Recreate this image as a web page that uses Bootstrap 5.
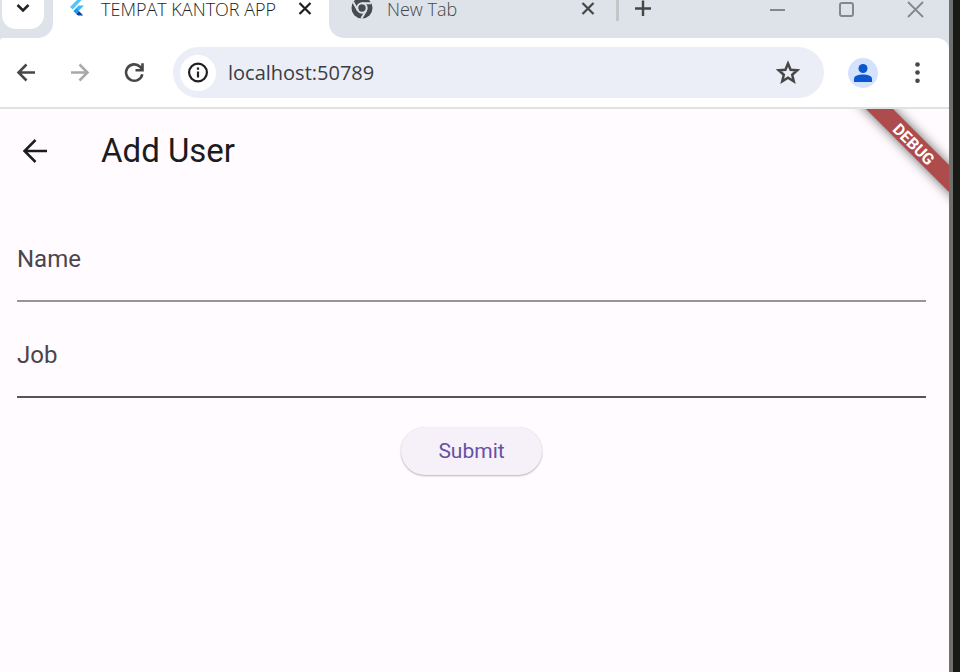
<!DOCTYPE html>
<html lang="en">
<head>
<meta charset="utf-8">
<meta name="viewport" content="width=device-width, initial-scale=1">
<title>TEMPAT KANTOR APP</title>
<link href="https://cdn.jsdelivr.net/npm/bootstrap@5.3.0/dist/css/bootstrap.min.css" rel="stylesheet">
<style>
  body { background: #181815; }
  button { color: inherit; }
  svg { display: block; flex: none; overflow: visible; }
  .icon-btn { border: 0; background: none; padding: 0; display: flex; align-items: center; justify-content: center; flex: none; }
  .browser { font-family: "Open Sans", "Noto Sans", sans-serif; }
  .window-edge { width: 4px; background: #6f716f; margin-right: 7px; }
  .tab-strip { background: #fff; height: 38px; }
  .strip-bg { background: #dee2e9; }
  .strip-start { width: 53px; border-bottom-right-radius: 15px; padding-left: 2px; }
  .tab-search { width: 42px; height: 29px; background: #fff; border-radius: 0 0 14px 14px; padding-bottom: 13px; color: #222; }
  .strip-end { border-bottom-left-radius: 15px; color: #444746; }
  .tab-line { height: 18px; }
  .tab-active { width: 276px; padding: 0 17px 0 16px; color: #1f1f1f; }
  .tab-other { width: 287px; padding: 0 21px 0 22px; }
  .tab-label { font-size: 18px; font-weight: 300; line-height: 18px; color: inherit; text-decoration: none; white-space: nowrap; }
  .tab-other .tab-label { margin-left: 14px; }
  .tab-divider { width: 3px; height: 21px; background: #c5c6c7; }
  .win-controls { color: #85888b; gap: 54px; padding-right: 26px; }
  .toolbar-wrap { background: #dee2e9; border-bottom: 2px solid #dfe1e2; }
  .toolbar { background: #fff; height: 69px; border-radius: 3px 12px 0 0; padding: 0 29px 0 14px; color: #474747; }
  .nav-icons { gap: 30px; margin-right: 27px; }
  .omnibox { background: #ebeef7; height: 51px; border-radius: 26px; padding: 0 24px 0 7px; }
  .site-info { width: 36px; height: 36px; border-radius: 50%; background: #fff; color: #1f1f1f; }
  .address { border: 0; background: none; outline: 0; padding: 0; margin-left: 12px; font-size: 20px; line-height: 28px; color: #3c3d40; min-width: 0; }
  .profile { width: 30px; height: 30px; border-radius: 50%; background: #d3e3fd; color: #0b57d0; margin: 0 37px 0 24px; }
  .app { background: #fffbfe; font-family: Roboto, "Liberation Sans", sans-serif; color: #1c1b1f; }
  .app-bar { height: 84px; padding-left: 22px; gap: 53px; }
  .app-title { font-size: 33px; line-height: 40px; font-weight: 400; }
  .debug-ribbon { pointer-events: none; }
  .debug-ribbon text { font: 700 16px Roboto, sans-serif; fill: #fff; }
  .debug-ribbon polygon { filter: drop-shadow(0 0 6px rgba(0,0,0,.6)); }
  .user-form { padding: 25px 23px 24px 17px; }
  .field { height: 84px; border-bottom: 2px solid #99949b; margin-bottom: 12px; padding: 26px 0 0 0; }
  .field-hover { border-color: #575358; margin-bottom: 29px; }
  .field label { font-size: 24px; line-height: 30px; color: #49454f; }
  .field input { border: 0; background: none; outline: 0; font-size: 24px; line-height: 30px; min-width: 0; }
  .submit-btn { width: 141px; height: 48px; border: 0; border-radius: 24px; background: #f6f1f9; color: #6750a4; font-size: 21px; line-height: 30px; box-shadow: 0 1px 2px rgba(0,0,0,.28), 0 0 1px rgba(0,0,0,.1); }
</style>
<script src="https://cdn.jsdelivr.net/npm/bootstrap@5.3.0/dist/js/bootstrap.bundle.min.js"></script>
</head>
<body class="d-flex min-vh-100">
<div class="browser d-flex flex-column flex-grow-1">
  <header>
    <div class="tab-strip d-flex">
      <div class="strip-bg strip-start">
        <button class="icon-btn tab-search" aria-label="Search tabs"><svg width="14" height="8" viewBox="0 0 14 8" fill="none" stroke="currentColor" stroke-width="2.5"><path d="M1.500 1l5.500 5.500 5.500-5.500"/></svg></button>
      </div>
      <div class="tab-active tab-line d-flex align-items-center">
        <svg width="16" height="20" viewBox="0 0 16 20"><path fill="#54c5f8" d="M10 -1h4.500L3.700 10.500 1 8z"/><path fill="#40b8f5" d="M9.500 6.500H15L9.500 12 6.500 9.700z"/><path fill="#1a9be8" d="M4.300 12L7.200 9.200l3 3-3 2.800z"/><path fill="#0b3fa0" d="M7.200 15l3-2.800 4 4.300H9z"/></svg>
        <a href="#" class="tab-label ms-3">TEMPAT KANTOR APP</a>
        <button class="icon-btn ms-auto" aria-label="Close tab"><svg width="14" height="14" viewBox="0 0 14 14" stroke="currentColor" stroke-width="2.200"><path d="M1.500 1l11 11m0-11l-11 11"/></svg></button>
      </div>
      <div class="strip-bg strip-end flex-grow-1 d-flex">
        <div class="tab-other tab-line d-flex align-items-center">
          <svg width="22" height="20" viewBox="0 0 22 20"><circle cx="11" cy="9" r="10.500" fill="#474a4e"/><circle cx="11" cy="9" r="4.700" fill="none" stroke="#dee2e9" stroke-width="2"/><path d="M11 4.300h9.500M6.900 11.400L2.300 3.300M15.100 11.400l-4.700 8.100" stroke="#dee2e9" stroke-width="2"/></svg>
          <a href="#" class="tab-label flex-grow-1">New Tab</a>
          <button class="icon-btn" aria-label="Close New Tab"><svg width="14" height="14" viewBox="0 0 14 14" stroke="currentColor" stroke-width="2.200"><path d="M1.500 1l11 11m0-11l-11 11"/></svg></button>
        </div>
        <div class="tab-divider"></div>
        <button class="icon-btn tab-line ms-3" aria-label="New tab"><svg width="16" height="16" viewBox="0 0 16 16" stroke="currentColor" stroke-width="2.400"><path d="M8 -.5v15.500M0 7.500h16"/></svg></button>
        <div class="win-controls tab-line d-flex align-items-center ms-auto">
          <button class="icon-btn" aria-label="Minimize"><svg width="15" height="15" viewBox="0 0 15 15" stroke="currentColor" stroke-width="2"><path d="M0 8h15"/></svg></button>
          <button class="icon-btn" aria-label="Maximize"><svg width="15" height="15" viewBox="0 0 15 15" fill="none" stroke="currentColor" stroke-width="2"><rect x="1" y="1" width="13" height="13" rx="2"/></svg></button>
          <button class="icon-btn" aria-label="Close"><svg width="15" height="15" viewBox="0 0 15 15" stroke="currentColor" stroke-width="1.800"><path d="M0 0l15 15M15 0L0 15"/></svg></button>
        </div>
      </div>
    </div>
    <div class="toolbar-wrap">
      <div class="toolbar d-flex align-items-center">
        <div class="nav-icons d-flex">
          <button class="icon-btn" aria-label="Back"><svg width="24" height="24" viewBox="0 0 24 24" fill="none" stroke="currentColor" stroke-width="2.500"><path d="M21 11.500H4.500M12.500 3.500l-8 8 8 8"/></svg></button>
          <button class="icon-btn" aria-label="Forward"><svg width="24" height="24" viewBox="0 0 24 24" fill="none" stroke="#a9a9a9" stroke-width="2.500"><path d="M3 11.500h16.500M11.500 3.500l8 8-8 8"/></svg></button>
          <button class="icon-btn" aria-label="Reload"><svg width="24" height="24" viewBox="0 0 24 24" fill="none" stroke="currentColor" stroke-width="2.600"><path d="M20.300 13.200A8.200 8.200 0 1 1 18 5.700l2.500 2.500M20.500 2.200v7h-7"/></svg></button>
        </div>
        <div class="omnibox d-flex align-items-center flex-grow-1">
          <button class="icon-btn site-info" aria-label="Site information"><svg width="20" height="20" viewBox="0 0 20 20" fill="none" stroke="currentColor" stroke-width="2.200"><circle cx="10" cy="9.500" r="8.900"/><path d="M10 8.500v6M10 4.500v2.200"/></svg></button>
          <input class="address flex-grow-1" type="text" aria-label="Address" value="localhost:50789">
          <button class="icon-btn" aria-label="Bookmark this page"><svg width="24" height="24" viewBox="0 0 24 24" fill="none" stroke="#474747" stroke-width="2.500"><path d="M12 2.500l2.600 6.200 6.700.600-5.100 4.400 1.600 6.600-5.800-3.500-5.800 3.500 1.600-6.600-5.100-4.400 6.700-.600z"/></svg></button>
        </div>
        <button class="icon-btn profile" aria-label="Profile"><svg width="18" height="18" viewBox="0 0 18 18" fill="currentColor"><circle cx="9" cy="4.500" r="4.500"/><path d="M0 18v-3c0-3.500 5-4.500 9-4.500s9 1 9 4.500v3z"/></svg></button>
        <button class="icon-btn" aria-label="Browser menu"><svg width="5" height="22" viewBox="0 0 5 22" fill="currentColor"><circle cx="2.500" cy="2.500" r="2.300"/><circle cx="2.500" cy="10.500" r="2.300"/><circle cx="2.500" cy="18.700" r="2.300"/></svg></button>
      </div>
    </div>
  </header>
  <main class="app flex-grow-1 position-relative overflow-hidden">
    <div class="app-bar d-flex align-items-center">
      <button class="icon-btn" aria-label="Go back"><svg width="26" height="26" viewBox="0 0 26 26" fill="none" stroke="currentColor" stroke-width="2.500"><path d="M25 13H3M13.500 2L2.500 13l11 11"/></svg></button>
      <h1 class="app-title mb-0">Add User</h1>
    </div>
    <form class="user-form">
      <div class="field d-flex align-items-start">
        <label for="name">Name</label><input id="name" class="flex-grow-1" type="text">
      </div>
      <div class="field field-hover d-flex align-items-start">
        <label for="job">Job</label><input id="job" class="flex-grow-1" type="text">
      </div>
      <button type="button" class="submit-btn d-block mx-auto">Submit</button>
    </form>
    <svg class="debug-ribbon position-absolute top-0 end-0" width="110" height="110" viewBox="0 0 110 110">
      <polygon points="17,-10 44,-10 130,76 130,103" fill="#ae4b4d"/>
      <text transform="translate(75 35) rotate(45)" text-anchor="middle" y="6">DEBUG</text>
    </svg>
  </main>
</div>
<div class="window-edge"></div>
</body>
</html>
